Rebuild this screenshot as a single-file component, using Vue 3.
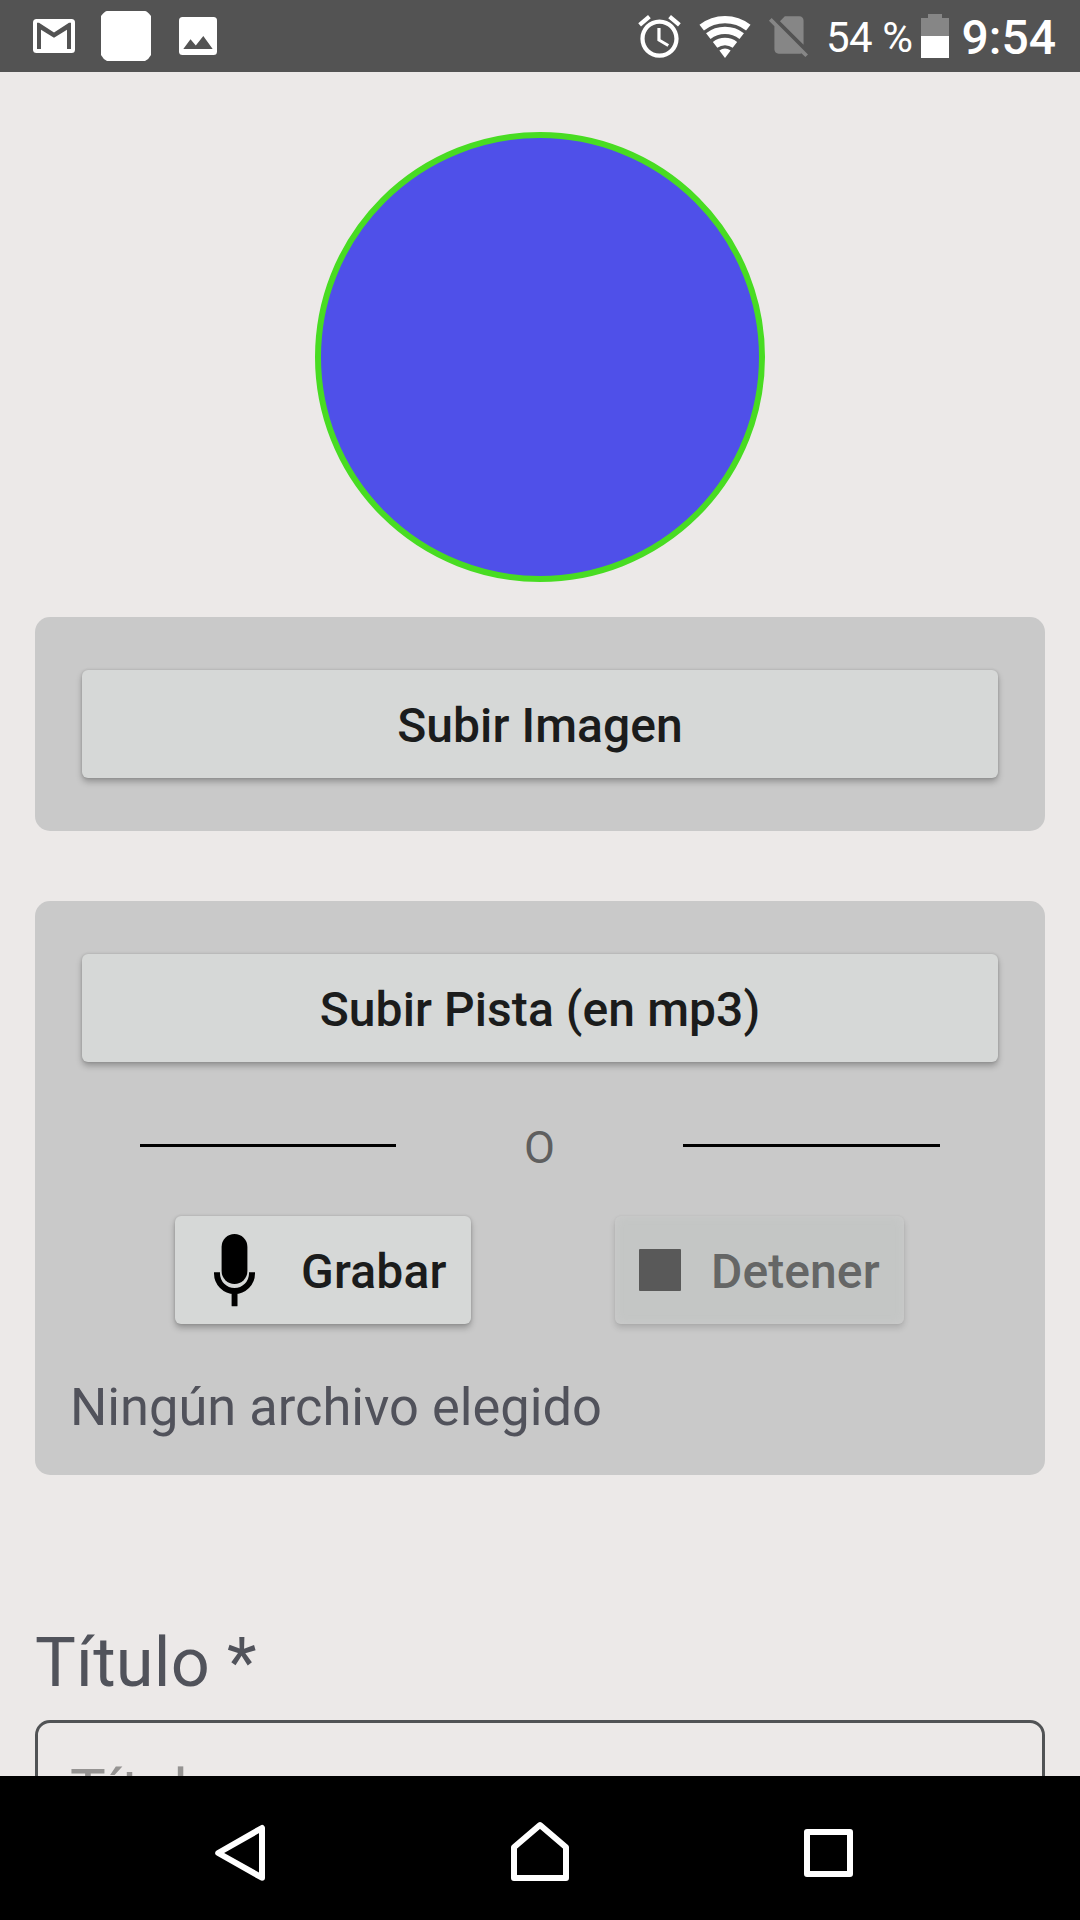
<script setup>
import { ref } from 'vue'

const fileName = ref('Ningún archivo elegido')
const recording = ref(false)
</script>

<template>
  <div class="screen">
    <header class="status">
      <svg class="gmail" width="42" height="34" viewBox="0 0 42 34">
        <rect width="42" height="34" rx="3.5" fill="#fff" />
        <path d="M4 30V3.7h2L21 13.5 36 3.7h2V30h-4V10.7L21 18.8 8 10.7V30z" fill="#535353" />
      </svg>
      <svg class="blank" width="50" height="50" viewBox="0 0 50 50">
        <path d="M6 0H44Q46 0 50 5V44Q48 48 44 50H6Q2 48 0 44V5Q4 0 6 0z" fill="#fff" />
      </svg>
      <svg class="photo" width="38" height="38" viewBox="0 0 38 38">
        <rect width="38" height="38" rx="3.5" fill="#fff" />
        <path d="M4.3 32 11.5 22.3 16.8 28.6 24.3 19 33.7 32z" fill="#535353" />
      </svg>
      <svg class="alarm" width="51" height="51" viewBox="0 0 24 24" fill="#fff">
        <path d="M22 5.72l-4.6-3.86-1.29 1.53 4.6 3.86L22 5.72zM7.88 3.39L6.6 1.86 2 5.71l1.29 1.53 4.59-3.85zM12.5 8H11v6l4.75 2.85.75-1.23-4-2.37V8zM12 4c-4.97 0-9 4.03-9 9s4.02 9 9 9c4.97 0 9-4.03 9-9s-4.03-9-9-9zm0 16c-3.87 0-7-3.13-7-7s3.13-7 7-7 7 3.13 7 7-3.13 7-7 7z" />
      </svg>
      <svg class="wifi" width="52" height="42" viewBox="0 0 52 42">
        <g fill="none" stroke="#fff" stroke-width="7.3">
          <path d="M2.7 11.7A38 38 0 0 1 49.3 11.7" />
          <path d="M9.3 20.1A27.3 27.3 0 0 1 42.7 20.1" />
          <path d="M16.1 28.9A16.2 16.2 0 0 1 35.9 28.9" />
        </g>
        <path d="M26 42 20.4 34.6A9.2 9.2 0 0 1 31.6 34.6z" fill="#fff" />
      </svg>
      <svg class="sim" width="50" height="50" viewBox="0 0 24 24" fill="#868686">
        <path d="M18.99 5c0-1.1-.89-2-1.99-2h-7L7.66 5.34 19 16.68 18.99 5zM3.65 3.88L2.38 5.15 5 7.77V19c0 1.1.9 2 2 2h10.01c.35 0 .67-.1.96-.26l1.88 1.88 1.27-1.27L3.65 3.88z" />
      </svg>
      <span class="percent">54 %</span>
      <svg class="battery" width="28" height="44" viewBox="0 0 28 44">
        <path d="M7 0H21V4H28V22H0V4H7z" fill="#868686" />
        <path d="M0 22H28V44H0z" fill="#fff" />
      </svg>
      <span class="clock">9:54</span>
    </header>

    <main class="content">
      <div class="avatar"></div>

      <section class="card card-image">
        <button class="btn wide">Subir Imagen</button>
      </section>

      <section class="card card-audio">
        <button class="btn wide">Subir Pista (en mp3)</button>
        <div class="divider">
          <i class="rule"></i>
          <span class="or">O</span>
          <i class="rule"></i>
        </div>
        <div class="actions">
          <button class="btn record">
            <svg width="41" height="73" viewBox="0 0 41 73">
              <rect x="7.6" y="0" width="25.8" height="50" rx="12.9" />
              <path d="M3 38.3V39.4A17.5 17.5 0 0 0 38 39.4V38.3" fill="none" stroke="#000" stroke-width="6" />
              <rect x="17.6" y="56" width="5.9" height="16.3" rx=".6" />
            </svg>
            <span>Grabar</span>
          </button>
          <button class="btn stop" :disabled="!recording">
            <i class="square"></i>
            <span>Detener</span>
          </button>
        </div>
        <p class="file">{{ fileName }}</p>
      </section>

      <label class="label">Título *</label>
      <div class="field">Título</div>
    </main>

    <nav class="nav">
      <svg class="back" width="72" height="72" viewBox="0 0 72 72"><path d="M58 16V65.7L14.2 41z" /></svg>
      <svg class="home" width="72" height="72" viewBox="0 0 72 72"><path d="M10 66V35.3L36 13 62 35.3V66z" /></svg>
      <svg class="recent" width="72" height="72" viewBox="0 0 72 72"><path d="M15 20H58V62H15z" /></svg>
    </nav>
  </div>
</template>

<style>
body {
  background: #ece9e8;
}
</style>

<style scoped>
.screen {
  width: 1080px;
  height: 1920px;
  display: flex;
  flex-direction: column;
  overflow: hidden;
  background: #ece9e8;
  font-family: Roboto, "Liberation Sans", sans-serif;
}

svg {
  display: block;
  flex: none;
}

.status {
  flex: none;
  height: 72px;
  display: flex;
  align-items: center;
  box-sizing: border-box;
  padding-left: 33px;
  background: #535353;
  color: #fff;
  white-space: nowrap;
}
.blank { margin-left: 26px; }
.photo { margin-left: 28px; }
.alarm { margin-left: 417px; margin-top: 1px; }
.wifi { margin-left: 14px; margin-top: 2px; }
.sim { margin-left: 13px; margin-top: -2px; }
.percent {
  width: 95px;
  margin-left: 12px;
  padding-top: 3px;
  font-size: 42px;
  letter-spacing: -0.5px;
}
.clock {
  margin-left: 12.5px;
  padding-top: 3px;
  font-size: 48px;
  font-weight: 500;
}

.content {
  flex: none;
  height: 1704px;
  box-sizing: border-box;
  padding: 60px 35px 0;
  overflow: hidden;
}

.avatar {
  width: 450px;
  height: 450px;
  margin: 0 auto;
  box-sizing: border-box;
  border: 6px solid #48dc22;
  border-radius: 50%;
  background: #4f50e9;
}

.card {
  box-sizing: border-box;
  padding: 53px 47px 0;
  border-radius: 15px;
  background: #c9c9c9;
}
.card-image {
  height: 214px;
  margin-top: 35px;
}
.card-audio {
  height: 574px;
  margin-top: 70px;
  padding-right: 0;
  padding-left: 0;
}

.btn {
  display: flex;
  align-items: center;
  box-sizing: border-box;
  height: 108px;
  margin: 0;
  padding: 3px 0 0;
  border: 0;
  border-radius: 6px;
  background: #d6d8d7;
  box-shadow: 0 4px 6px rgba(0, 0, 0, 0.26), 0 0 3px rgba(0, 0, 0, 0.16);
  color: #1b1c1c;
  font: 500 48px/56px Roboto, "Liberation Sans", sans-serif;
  letter-spacing: 0.08px;
  white-space: nowrap;
}
.wide {
  width: 916px;
  justify-content: center;
}
.card-audio .wide {
  margin: 0 47px;
}

.divider {
  height: 61px;
  margin-top: 53px;
  padding: 0 105px;
  display: flex;
  align-items: center;
  justify-content: space-between;
}
.rule {
  width: 256px;
  height: 3px;
  background: #000;
}
.rule:last-child {
  width: 257px;
}
.or {
  padding-top: 4px;
  font-size: 45px;
  line-height: 61px;
  color: #5f5f5f;
}

.actions {
  margin: 40px 0 0 140px;
  display: flex;
  gap: 144px;
}
.record {
  width: 296px;
  padding-left: 39px;
}
.record svg {
  margin-top: -3px;
}
.record span {
  margin-left: 46px;
  letter-spacing: 0.2px;
}
.stop {
  width: 289px;
  padding-left: 24px;
  background: #c4c6c5;
  color: #656666;
  box-shadow: inset 0 0 8px #cbcbcb, 0 4px 6px rgba(0, 0, 0, 0.14), 0 0 3px rgba(0, 0, 0, 0.05);
}
.square {
  width: 42px;
  height: 42px;
  margin-top: -3px;
  border-radius: 1px;
  background: #595959;
}
.stop span {
  margin-left: 30px;
}

.file {
  margin: 53px 35px 0;
  font-size: 52.4px;
  line-height: 60px;
  color: #51525b;
  white-space: nowrap;
}

.label {
  display: block;
  margin-top: 148px;
  font-size: 68.5px;
  line-height: 80px;
  letter-spacing: 0.2px;
  color: #51535b;
}
.field {
  box-sizing: border-box;
  height: 150px;
  margin-top: 17px;
  padding: 33px 32px 0;
  border: 3px solid #515355;
  border-radius: 15px;
  font-size: 60px;
  line-height: 70px;
  color: #959392;
}

.nav {
  flex: 1;
  display: flex;
  align-items: center;
  background: #000;
}
.nav path {
  fill: none;
  stroke: #fff;
  stroke-width: 6;
  stroke-linejoin: round;
}
.back { margin-left: 204px; }
.home { margin-left: 228px; }
.recent { margin-left: 216px; }
</style>
